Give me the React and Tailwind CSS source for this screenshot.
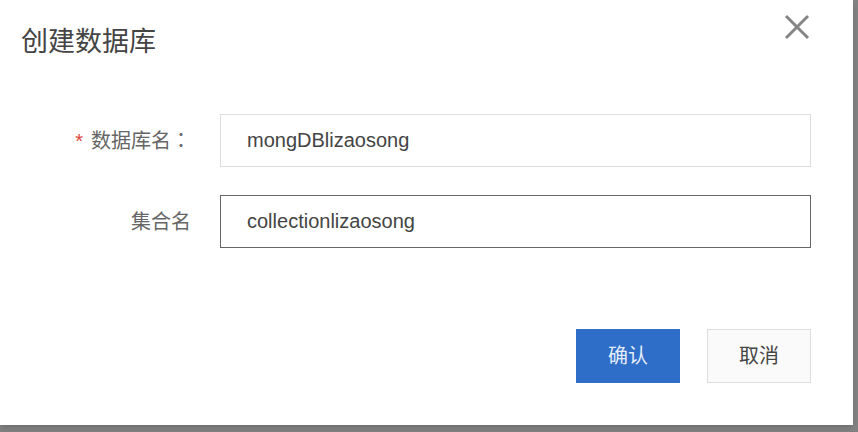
const field = "h-[53px] min-w-0 flex-1 border bg-white px-[26px] text-[20px] text-[#444] outline-none";

function Field({ id, label, required, value, focused }) {
  return (
    <div className="flex items-center">
      <label htmlFor={id} className="w-[191px] shrink-0 text-right text-[20px] text-[#666]">
        {required && <span className="mr-2 text-[#d9453a]">*</span>}
        {label}
        {required && <span className="font-['Noto_Sans_CJK_TC',sans-serif]">：</span>}
      </label>
      <input
        id={id}
        type="text"
        defaultValue={value}
        required={required}
        className={`ml-[29px] ${field} ${focused ? "border-[#666]" : "border-[#ddd]"}`}
      />
    </div>
  );
}

export default function App() {
  return (
    <div className="min-h-screen bg-[#818181] pr-[5px] pb-[7px] font-['Liberation_Sans','Noto_Sans_CJK_SC',sans-serif]">
      <div role="dialog" aria-labelledby="title" className="bg-white pb-[42px] shadow-md">
        <header className="flex items-start justify-between pt-[14px] pr-[42px] pl-[21px]">
          <h1 id="title" className="pt-[9px] text-[27px] leading-[38px] text-[#444]">创建数据库</h1>
          <button type="button" aria-label="关闭" className="text-[#858585]">
            <svg width="27" height="26" viewBox="0 0 27 26" fill="none" stroke="currentColor" strokeWidth="3">
              <path d="M2 2 24 24M24 2 2 24" />
            </svg>
          </button>
        </header>
        <form className="pt-[53px] pr-[42px]">
          <div className="flex flex-col gap-7">
            <Field id="database" label="数据库名" required value="mongDBlizaosong" />
            <Field id="collection" label="集合名" value="collectionlizaosong" focused />
          </div>
          <div className="mt-[81px] flex justify-end gap-[27px]">
            <button type="button" className="h-[54px] w-[104px] bg-[#2e6dc8] text-[20px] text-[#e4edf9]">确认</button>
            <button type="button" className="h-[54px] w-[104px] border border-[#ddd] bg-[#fafafa] text-[20px] text-[#444]">取消</button>
          </div>
        </form>
      </div>
    </div>
  );
}
